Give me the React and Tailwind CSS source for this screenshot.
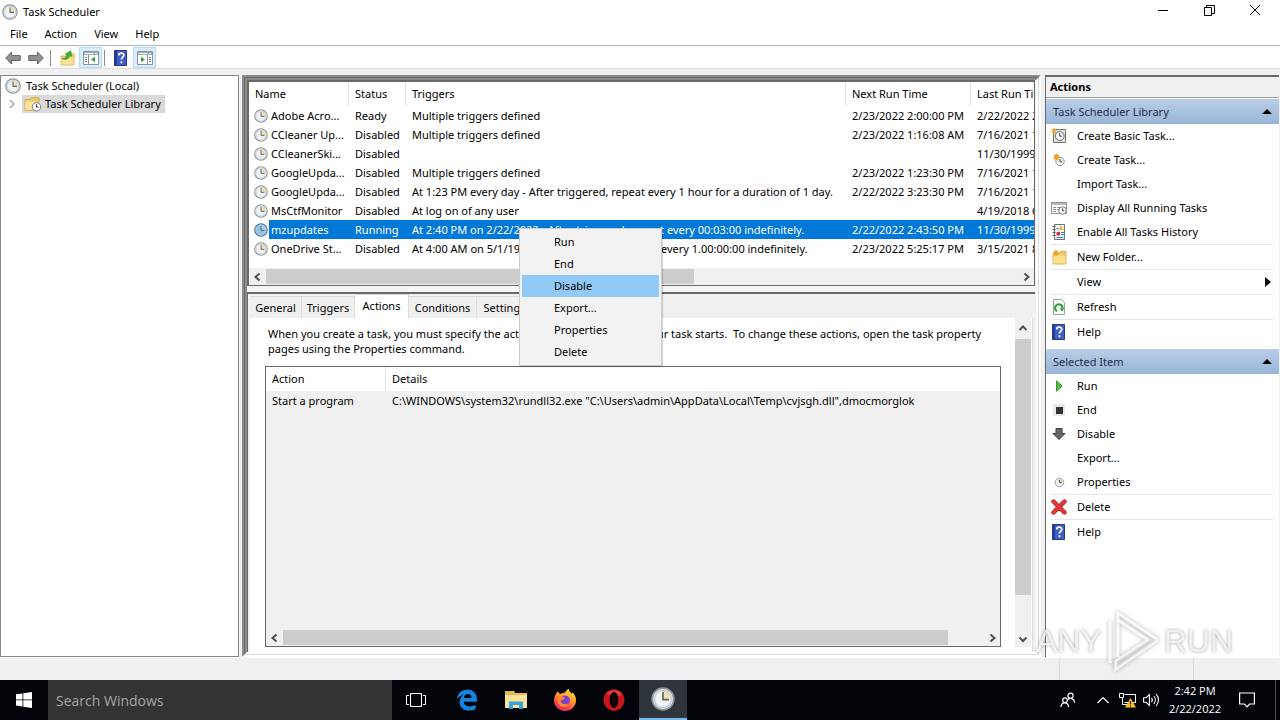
import React, { useState } from "react";

const tasks = [
  { name: "Adobe Acro...", status: "Ready", trigger: "Multiple triggers defined", next: "2/23/2022 2:00:00 PM", last: "2/22/2022 2:00:01 PM" },
  { name: "CCleaner Up...", status: "Disabled", trigger: "Multiple triggers defined", next: "2/23/2022 1:16:08 AM", last: "7/16/2021 1:16:08 AM" },
  { name: "CCleanerSki...", status: "Disabled", trigger: "", next: "", last: "11/30/1999 12:00:00 AM" },
  { name: "GoogleUpda...", status: "Disabled", trigger: "Multiple triggers defined", next: "2/23/2022 1:23:30 PM", last: "7/16/2021 1:23:30 PM" },
  { name: "GoogleUpda...", status: "Disabled", trigger: "At 1:23 PM every day - After triggered, repeat every 1 hour for a duration of 1 day.", next: "2/22/2022 3:23:30 PM", last: "7/16/2021 1:23:30 PM" },
  { name: "MsCtfMonitor", status: "Disabled", trigger: "At log on of any user", next: "", last: "4/19/2018 6:40:12 AM" },
  { name: "mzupdates", status: "Running", trigger: "At 2:40 PM on 2/22/2022 - After triggered, repeat every 00:03:00 indefinitely.", next: "2/22/2022 2:43:50 PM", last: "11/30/1999 12:00:00 AM" },
  { name: "OneDrive St...", status: "Disabled", trigger: "At 4:00 AM on 5/1/1992 - After triggered, repeat every 1.00:00:00 indefinitely.", next: "2/23/2022 5:25:17 PM", last: "3/15/2021 8:12:44 AM" },
];

const Clock = ({ size = 14, face = "#f1f3f3", wedge = "#f3dfae", rim = "#8d959b" }) => (
  <svg width={size} height={size} viewBox="0 0 16 16" className="shrink-0">
    <circle cx="8" cy="8" r="7.2" fill={face} stroke={rim} strokeWidth="1.2" />
    <path d="M8 8V2.2A5.8 5.8 0 0 1 13.8 8Z" fill={wedge} />
    <circle cx="8" cy="8" r="5.7" fill="none" stroke="#b9cddb" strokeWidth=".8" />
    <path d="M8 3.4V8.4H12" fill="none" stroke="#5c646b" strokeWidth="1.1" />
  </svg>
);

const HelpIcon = () => (
  <svg width="16" height="16" viewBox="0 0 16 16">
    <path d="M1.5.5h12v15h-12z" fill="#3f5fc4" stroke="#25368c" />
    <path d="M2 1h2v14H2z" fill="#263a9c" />
    <path d="M5.8 5.4C5.8 2.4 10.8 2.5 10.8 5.2 10.8 7.2 8.4 7 8.4 9.6M8.4 11.3v1.9" fill="none" stroke="#fff" strokeWidth="1.7" />
  </svg>
);

const ConsoleIcon = ({ flip }) => (
  <svg width="16" height="16" viewBox="0 0 16 16">
    <path d="M.5 1.5h15v13H.5z" fill="#fff" stroke="#8b959d" />
    <path d="M1 2h14v3H1z" fill="#a2abb2" />
    <path d="M2 3.5h8M12 3.5h2" stroke="#fff" />
    {flip ? (
      <>
        <path d="M10.5 5v9" stroke="#8b959d" />
        <path d="M12 7.5h2M12 9.5h2M12 11.5h2" stroke="#6d7c88" />
        <path d="M4 6.8v5.4L8 9.5z" fill="#3aa13a" />
      </>
    ) : (
      <>
        <path d="M5.5 5v9" stroke="#8b959d" />
        <path d="M2 7.5h2M2 9.5h2M2 11.5h2" stroke="#6d7c88" />
        <path d="M12 6.8v5.4L8 9.5z" fill="#3aa13a" />
      </>
    )}
  </svg>
);

const NavArrow = ({ right }) => (
  <svg width="16" height="14" viewBox="0 0 16 14">
    <path
      d={right ? "M15.3 7 9.5 1v3.6H.8v4.8h8.7V13z" : "M.7 7l5.8-6v3.6h8.7v4.8H6.5V13z"}
      fill="#929292"
      stroke="#5f5f5f"
    />
  </svg>
);

const Folder = ({ children }) => (
  <svg width="18" height="16" viewBox="0 0 18 16">
    <path d="M1 3.5h5l1.5-2H15v12.8H1z" fill="#eec867" stroke="#cfa13c" strokeWidth=".8" />
    <path d="M1.4 5.5h13.2v8.4H1.4z" fill="#fbe39b" />
    {children}
  </svg>
);

const FolderClock = () => (
  <Folder>
    <circle cx="12.5" cy="10.8" r="4.2" fill="#fff" stroke="#747c82" />
    <path d="M12.5 8.2v2.9h2.2" fill="none" stroke="#333" />
  </Folder>
);

const FolderUp = () => (
  <svg width="18" height="16" viewBox="0 0 18 16">
    <path d="M2 6h6l1.5-2H15v11H2z" fill="#f3d27c" stroke="#cfa13c" strokeWidth=".8" />
    <path d="M2.4 8h12.2v6.6H2.4z" fill="#fbe09a" />
    <path d="M3 8.5c3.5 0 4.6-2 5-3.6L6.2 4 11.8.8l1 5.6-1.7-.8C10 8.5 7 10.6 3 8.5z" fill="#45b32f" stroke="#2a8a1c" strokeWidth=".6" />
  </svg>
);

const NewFolder = () => (
  <svg width="18" height="16" viewBox="0 0 18 16">
    <path d="M2 4.5h6l1.5-2H15V15H2z" fill="#eec867" stroke="#cfa13c" strokeWidth=".8" />
    <path d="M2.4 6.5h12.2v8H2.4z" fill="#fbdf8c" />
    <path d="M5 1v6M2 4h6M2.9 1.9l4.2 4.2M7.1 1.9 2.9 6.1" stroke="#f0a020" strokeWidth="1.2" />
  </svg>
);

const BasicTaskIcon = () => (
  <svg width="16" height="16" viewBox="0 0 16 16">
    <path d="M2.5 1.5h12v13h-12z" fill="#e4e1d6" stroke="#77756c" />
    <circle cx="8.7" cy="8" r="4.4" fill="#fff" stroke="#56707c" />
    <path d="M8.7 5.2v3h2.2" fill="none" stroke="#333" />
    <path d="M3 0v6M0 3h6M.9.9l4.2 4.2M5.1.9.9 5.1" stroke="#f0a42c" />
  </svg>
);

const CreateTaskIcon = () => (
  <svg width="16" height="16" viewBox="0 0 16 16">
    <circle cx="9" cy="9.5" r="4.2" fill="#f5f5f0" stroke="#8b9298" />
    <path d="M9 7v2.8h2.3" fill="none" stroke="#444" />
    <path d="M5.5 2v6M2.5 5h6M3.4 2.9l4.2 4.2M7.6 2.9 3.4 7.1" stroke="#f0a020" strokeWidth="1.6" />
  </svg>
);

const RunningIcon = () => (
  <svg width="16" height="16" viewBox="0 0 16 16">
    <path d="M.5 2.5h15v11H.5z" fill="#fff" stroke="#8c9297" />
    <path d="M1 3h14v2H1z" fill="#b3b9bd" />
    <path d="M2 7.5h3M6 7.5h4M2 9.5h3M6 9.5h2M2 11.5h3" stroke="#8c9297" />
    <circle cx="11.5" cy="10.5" r="3.8" fill="#f6f6f6" stroke="#777e84" />
    <path d="M11.5 8.3v2.4h1.8" fill="none" stroke="#444" />
  </svg>
);

const HistoryIcon = () => (
  <svg width="16" height="16" viewBox="0 0 16 16">
    <path d="M3.5.5h10v15h-10z" fill="#eef3fa" stroke="#68737e" />
    <path d="M1.5 2.5h3M1.5 5.5h3M1.5 8.5h3M1.5 11.5h3" stroke="#555" />
    <path d="M10 1.5 12.6 6H7.4z" fill="#f2c029" />
    <path d="M5.5 4.5h2M10 8.5h3M10 10.5h3M5.5 13.5h7" stroke="#4d76c4" />
    <circle cx="7.3" cy="9.8" r="2" fill="#cf2d2d" />
  </svg>
);

const RefreshIcon = () => (
  <svg width="16" height="16" viewBox="0 0 16 16">
    <path d="M2.5.5h8l3 3v12h-11z" fill="#f5faf5" stroke="#9aa59a" />
    <path d="M6 12.2A3.7 3.7 0 1 1 11.4 9.8" fill="none" stroke="#35a03f" strokeWidth="2" />
    <path d="M8.8 9.3h4.4L11 12.8z" fill="#35a03f" />
  </svg>
);

const RunIcon = () => (
  <svg width="16" height="16" viewBox="0 0 16 16">
    <path d="M5.5 2.8v10.4l5.6-5.2z" fill="#4fbf3f" stroke="#2f962a" />
  </svg>
);

const EndIcon = () => (
  <svg width="16" height="16" viewBox="0 0 16 16">
    <path d="M2 2h12v12H2z" fill="#e9e9e9" />
    <path d="M5 5h7v7H5z" fill="#333" />
  </svg>
);

const DisableIcon = () => (
  <svg width="16" height="16" viewBox="0 0 16 16">
    <path d="M5 2.5h6v5h3L8 13.5 2 7.5h3z" fill="#666" stroke="#3c3c3c" />
  </svg>
);

const DeleteIcon = () => (
  <svg width="16" height="16" viewBox="0 0 16 16">
    <path d="M2.5 2.5l11 11M13.5 2.5l-11 11" stroke="#b91d20" strokeWidth="4.4" strokeLinecap="round" />
    <path d="M2.5 2.5l11 11M13.5 2.5l-11 11" stroke="#e5383b" strokeWidth="3" strokeLinecap="round" />
  </svg>
);

const PropertiesIcon = () => (
  <svg width="16" height="16" viewBox="0 0 16 16">
    <circle cx="8.5" cy="8.5" r="4.3" fill="#eef3f6" stroke="#9aa3a9" />
    <path d="M8.5 8.5V5.2a3.3 3.3 0 0 1 3.3 3.3z" fill="#f2cf8e" />
    <path d="M8.5 5.8v3h2.4" fill="none" stroke="#555" />
  </svg>
);

const libraryActions = [
  { label: "Create Basic Task...", icon: <BasicTaskIcon /> },
  { label: "Create Task...", icon: <CreateTaskIcon /> },
  { label: "Import Task..." },
  { label: "Display All Running Tasks", icon: <RunningIcon /> },
  { label: "Enable All Tasks History", icon: <HistoryIcon />, line: true },
  { label: "New Folder...", icon: <NewFolder />, line: true },
  { label: "View", arrow: true, line: true },
  { label: "Refresh", icon: <RefreshIcon />, line: true },
  { label: "Help", icon: <HelpIcon /> },
];

const itemActions = [
  { label: "Run", icon: <RunIcon /> },
  { label: "End", icon: <EndIcon /> },
  { label: "Disable", icon: <DisableIcon /> },
  { label: "Export..." },
  { label: "Properties", icon: <PropertiesIcon />, line: true },
  { label: "Delete", icon: <DeleteIcon />, line: true },
  { label: "Help", icon: <HelpIcon /> },
];

const ActionSection = ({ title, items }) => (
  <section>
    <h3 className="flex h-[25px] items-center justify-between bg-gradient-to-b from-[#b9cee6] to-[#98b5d8] pl-[7px] pr-[7px] text-[#1e2f4a]">
      {title}
      <svg width="10" height="5" viewBox="0 0 10 5">
        <path d="M0 5 5 0l5 5z" fill="#000" />
      </svg>
    </h3>
    {items.map((item) => (
      <div key={item.label} className="pl-[5px] pr-[6px]">
        <button className={`flex h-6 w-full items-center text-left hover:bg-[#e5f1fb] ${item.line ? "box-content border-b border-[#e6e6e6]" : ""}`}>
          <span className="flex w-[26px] shrink-0">{item.icon}</span>
          <span className="flex-1">{item.label}</span>
          {item.arrow && (
            <svg width="6" height="10" viewBox="0 0 6 10" className="mr-[2px]">
              <path d="M0 0l6 5-6 5z" fill="#000" />
            </svg>
          )}
        </button>
      </div>
    ))}
  </section>
);

const chevrons = {
  left: "M7.5 2.5 3.5 6l4 3.5",
  right: "M4.5 2.5l4 3.5-4 3.5",
  up: "M2.5 8 6 4.5 9.5 8",
  down: "M2.5 4.5 6 8l3.5-3.5",
};

const ScrollButton = ({ dir }) => (
  <button aria-label={`Scroll ${dir}`} className="flex h-[17px] w-[17px] shrink-0 items-center justify-center">
    <svg width="12" height="12" viewBox="0 0 12 12">
      <path d={chevrons[dir]} fill="none" stroke="#505050" strokeWidth="2" />
    </svg>
  </button>
);

const HScroll = ({ thumb }) => (
  <div className="flex h-[17px] shrink-0 items-center bg-[#f0f0f0]">
    <ScrollButton dir="left" />
    <div className="flex h-[15px] flex-1">
      <div className={`h-full bg-[#cdcdcd] ${thumb}`} />
    </div>
    <ScrollButton dir="right" />
  </div>
);

const TaskTable = () => (
  <div className="min-h-0 flex-1 overflow-hidden">
    <table className="w-[864px] table-fixed border-separate border-spacing-0 whitespace-nowrap text-left">
      <colgroup>
        <col className="w-[100px]" />
        <col className="w-[57px]" />
        <col className="w-[440px]" />
        <col className="w-[125px]" />
        <col />
      </colgroup>
      <thead>
        <tr className="h-6">
          <th className="border-r border-[#e2e2e2] pl-[6px] font-normal">Name</th>
          <th className="border-r border-[#e2e2e2] pl-[6px] font-normal">Status</th>
          <th className="border-r border-[#e2e2e2] pl-[6px] font-normal">Triggers</th>
          <th className="border-r border-[#e2e2e2] pl-[6px] font-normal">Next Run Time</th>
          <th className="pl-[6px] font-normal">Last Run Time</th>
        </tr>
      </thead>
      <tbody>
        {tasks.map((t, i) => {
          const on = t.name === "mzupdates";
          const cell = on ? "bg-[#0078d7] pl-[6px] text-white" : "pl-[6px]";
          return (
            <tr key={i} className="h-[19px]">
              <td className="p-0">
                <div className="flex h-[19px] items-center pl-[5px]">
                  <Clock face={on ? "#8fc4ec" : undefined} wedge={on ? "#a9cfe6" : undefined} rim={on ? "#4a7696" : undefined} />
                  <span className={on ? "ml-px flex-1 bg-[#0078d7] pl-[2px] leading-[19px] text-white" : "ml-px pl-[2px] leading-[19px]"}>{t.name}</span>
                </div>
              </td>
              <td className={cell}>{t.status}</td>
              <td className={cell}>{t.trigger}</td>
              <td className={cell}>{t.next}</td>
              <td className={cell}>{t.last}</td>
            </tr>
          );
        })}
      </tbody>
    </table>
  </div>
);

const tabs = [
  { label: "General", width: "w-[52px]" },
  { label: "Triggers", width: "w-[53px]" },
  { label: "Actions", width: "w-[54px]" },
  { label: "Conditions", width: "w-[68px]" },
  { label: "Settings", width: "w-[56px]" },
];

const DetailsPane = () => {
  const [active, setActive] = useState("Actions");

  return (
    <div className="flex min-h-0 flex-1 flex-col border-l border-t-2 border-[#696969] bg-[#f0f0f0] pl-[2px]">
      <div role="tablist" className="flex h-6 shrink-0 items-end">
        {tabs.map((tab) => (
          <button
            key={tab.label}
            role="tab"
            aria-selected={active === tab.label}
            onClick={() => setActive(tab.label)}
            className={`${tab.width} whitespace-nowrap border-r border-t border-[#dcdcdc] text-center ${
              active === tab.label ? "h-6 bg-white pb-[2px]" : "h-[22px] bg-[#f0f0f0]"
            }`}
          >
            {tab.label}
          </button>
        ))}
      </div>
      <div className="mr-[2px] flex min-h-0 flex-1 border-r border-[#dcdcdc] bg-white">
        <div className="flex min-w-0 flex-1 flex-col pb-[5px] pl-[15px] pr-[14px]">
          <p className="h-12 shrink-0 whitespace-pre pl-[3px] pt-2 leading-[15px]">
            When you create a task, you must specify the action that will occur when your task starts.{"  "}To change these actions, open the task property
            <br />
            pages using the Properties command.
          </p>
          <div className="flex min-h-0 flex-1 flex-col border border-[#696969] bg-[#f0f0f0]">
            <table className="w-full table-fixed border-separate border-spacing-0 whitespace-nowrap text-left">
              <colgroup>
                <col className="w-[120px]" />
                <col />
              </colgroup>
              <thead>
                <tr className="h-6 bg-white">
                  <th className="border-r border-[#e2e2e2] pl-[6px] font-normal">Action</th>
                  <th className="pl-[6px] font-normal">Details</th>
                </tr>
              </thead>
              <tbody>
                <tr className="h-[19px]">
                  <td className="pl-[6px]">Start a program</td>
                  <td className="pl-[6px]">C:\WINDOWS\system32\rundll32.exe "C:\Users\admin\AppData\Local\Temp\cvjsgh.dll",dmocmorglok</td>
                </tr>
              </tbody>
            </table>
            <div className="flex-1" />
            <HScroll thumb="w-[95%]" />
          </div>
        </div>
        <div className="mb-[5px] mr-px flex w-4 flex-col items-center bg-[#f0f0f0] pt-px">
          <ScrollButton dir="up" />
          <div className="w-4 flex-1 pt-[3px]">
            <div className="h-[88%] w-full bg-[#cdcdcd]" />
          </div>
          <ScrollButton dir="down" />
        </div>
      </div>
    </div>
  );
};

const menuItems = ["Run", "End", "Disable", "Export...", "Properties", "Delete"];

const ContextMenu = () => (
  <div role="menu" className="absolute left-[519px] top-[228px] z-10 w-[143px] border border-[#cccccc] bg-[#f2f2f2] p-[2px] shadow-[1px_1px_1px_rgba(0,0,0,0.15)]">
    {menuItems.map((label) => (
      <button key={label} role="menuitem" className={`block h-[22px] w-full pl-8 text-left ${label === "Disable" ? "bg-[#91c9f7]" : "hover:bg-[#91c9f7]"}`}>
        {label}
      </button>
    ))}
  </div>
);

const Watermark = () => (
  <div className="pointer-events-none absolute bottom-[47px] right-[47px] z-20 flex items-center font-['Liberation_Sans',sans-serif] text-[32px] leading-[64px] text-white/80 [text-shadow:0_0_3px_rgba(0,0,0,0.4)]">
    <span>ANY</span>
    <svg width="62" height="64" viewBox="0 0 62 64" className="drop-shadow-[0_0_2px_rgba(0,0,0,0.35)]">
      <path d="M8 12v42M16 12V4l40 27M56 31 14 60v-8l32-21-30-20M16 12v36" fill="none" stroke="#fff" strokeWidth="3" opacity=".85" />
      <path d="M14 60 56 31l-8-1-34 22z" fill="#e2e2e2" opacity=".5" />
    </svg>
    <span>RUN</span>
  </div>
);

const Taskbar = () => (
  <footer className="flex h-10 shrink-0 items-center bg-[#02040a] text-white">
    <button aria-label="Start" className="flex h-10 w-12 items-center justify-center">
      <svg width="16" height="16" viewBox="0 0 16 16" fill="#fff">
        <path d="M0 2.3 6.5 1.4v6.1H0zM7.3 1.3 16 0v7.5H7.3zM0 8.3h6.5v6.2L0 13.6zM7.3 8.3H16V16l-8.7-1.3z" />
      </svg>
    </button>
    <input
      aria-label="Search Windows"
      placeholder="Search Windows"
      className="h-10 w-[344px] bg-[#333333] px-2 font-['Open_Sans',sans-serif] text-[14px] placeholder:text-[#a6a6a6] focus:outline-none"
    />
    <div className="flex gap-px">
      <button aria-label="Task View" className="mr-[2px] flex h-10 w-12 items-center justify-center">
        <svg width="20" height="14" viewBox="0 0 20 14" fill="none" stroke="#fff">
          <path d="M4.5.5h11v13h-11zM3 2.5H.5v9H3M17 2.5h2.5v9H17" />
        </svg>
      </button>
      <button aria-label="Edge" className="flex h-10 w-12 items-center justify-center">
        <svg width="22" height="22" viewBox="0 0 22 22">
          <path d="M1 10C1.6 4 6 .5 11.4.5 17.5.5 21 5 21 10.5v2.3H7.8c.2 3 2.7 4.6 5.8 4.6 2.3 0 4.3-.7 6-1.7v4.2c-1.9 1.1-4.2 1.6-6.7 1.6-5.7 0-9.3-3.3-9.3-8.3 0-3.5 1.9-6.2 4.7-7.7C5 6.1 2.7 7.8 1 10zM7.9 9h7.6c0-2.4-1.2-3.9-3.6-3.9-2.2 0-3.6 1.6-4 3.9z" fill="#1484dd" />
        </svg>
      </button>
      <button aria-label="File Explorer" className="flex h-10 w-12 items-center justify-center">
        <svg width="22" height="20" viewBox="0 0 22 20">
          <path d="M0 1h9l1.5 2H22v15H0z" fill="#e9b94d" />
          <path d="M0 5h22v13H0z" fill="#fbe29a" />
          <path d="M4 19v-7.5h14V19h-4v-4H8v4z" fill="#35a5dc" />
        </svg>
      </button>
      <button aria-label="Firefox" className="flex h-10 w-12 items-center justify-center">
        <svg width="24" height="24" viewBox="0 0 24 24">
          <defs>
            <linearGradient id="fox" x1=".8" y1="0" x2=".3" y2="1">
              <stop offset="0" stopColor="#ffe64a" />
              <stop offset=".45" stopColor="#ff9a26" />
              <stop offset=".8" stopColor="#ff3b52" />
              <stop offset="1" stopColor="#e3207f" />
            </linearGradient>
          </defs>
          <path d="M4.5 3.5 7 6c1.3-.7 2.8-1 4.2-1L15.5.5c.3 2.5 2 3.5 3.7 5.5.2-.8.1-1.5 0-2C22 6.5 23.3 9.5 23 13c-.5 6-5.2 10-11 10C6 23 1 18.5 1 12.5c0-3 1.2-6 3.5-9z" fill="url(#fox)" />
          <circle cx="12" cy="12.5" r="5" fill="#7a3fd0" />
          <path d="M5 9.5c2.5-1.5 5-1 7 .5-1 2-3 1.7-4.5 2.7 1 4 6 4.5 8.5 2-1 4-6 5.5-9 3.3C4.5 16 4.2 12 5 9.5z" fill="#ff8a2a" />
        </svg>
      </button>
      <button aria-label="Opera" className="flex h-10 w-12 items-center justify-center">
        <svg width="22" height="22" viewBox="0 0 22 22">
          <ellipse cx="11" cy="11" rx="10.5" ry="10.8" fill="#c4161c" />
          <path d="M3 5a10.5 10.5 0 0 1 16 0L16 7 7 6z" fill="#ea5a5c" opacity=".6" />
          <ellipse cx="11" cy="11" rx="4.3" ry="8" fill="#0b0507" />
        </svg>
      </button>
      <button aria-label="Task Scheduler" className="flex h-10 w-12 items-center justify-center border-b-2 border-[#76b9ed] bg-[#2f353b]">
        <Clock size={24} />
      </button>
    </div>
    <div className="ml-auto flex h-10 items-center">
      <button aria-label="People" className="mr-[21px] flex">
        <svg width="16" height="16" viewBox="0 0 16 16" fill="none" stroke="#fff" strokeWidth="1.2">
          <circle cx="10.5" cy="3.8" r="2.6" />
          <circle cx="5" cy="8.2" r="2.3" />
          <path d="M1 15c0-5.5 7.5-5.5 7.5 0M8 7.6c3-2.4 6.5-.6 6.700 3" />
        </svg>
      </button>
      <button aria-label="Show hidden icons" className="mr-[10px] flex">
        <svg width="12" height="8" viewBox="0 0 12 8" fill="none" stroke="#fff" strokeWidth="1.2">
          <path d="M.5 7 6 1.5 11.5 7" />
        </svg>
      </button>
      <button aria-label="Network" className="mr-[7px] flex">
        <svg width="17" height="16" viewBox="0 0 17 16">
          <path d="M5.5 2.5h11v8h-11M3.5 6v6.5h5M.5 1.5h4v4h-4z" fill="none" stroke="#fff" />
          <path d="M11.5 6 17 15.5H6z" fill="#ffc21a" />
          <path d="M11.5 9v3.5M11.5 13.3v1.2" stroke="#222" strokeWidth="1.2" />
        </svg>
      </button>
      <button aria-label="Volume" className="mr-2 flex">
        <svg width="17" height="14" viewBox="0 0 17 14" fill="none" stroke="#fff" strokeWidth="1.1">
          <path d="M.6 4.7h2.6L6.4 1.5v11L3.2 9.3H.6zM8.5 4.8c1 1.3 1 3.1 0 4.4M10.8 3c2 2.3 2 5.7 0 8M13.2 1.2c3 3.4 3 8.2 0 11.6" />
        </svg>
      </button>
      <div className="w-[54px] text-center font-['Open_Sans',sans-serif] text-[11px] leading-[18px]">
        2:42 PM
        <br />
        2/22/2022
      </div>
      <button aria-label="Notifications" className="ml-[17px] mr-5 flex">
        <svg width="16" height="16" viewBox="0 0 16 16" fill="none" stroke="#fff" strokeWidth="1.2">
          <path d="M.6 1h14.8v11H10.5L8 14.8 5.5 12H.6z" />
        </svg>
      </button>
      <div className="h-10 w-[5px] border-l border-[#4a4c50]" />
    </div>
  </footer>
);

const App = () => {
  return (
    <div className="relative flex h-screen flex-col overflow-hidden bg-[#f0f0f0] font-['Noto_Sans','Open_Sans',sans-serif] text-[11px] leading-[16px] text-black">
      {/* Title bar */}
      <header className="flex h-6 shrink-0 items-center bg-white pl-[2px] pr-[2px]">
        <Clock size={16} />
        <h1 className="ml-[5px] flex-1">Task Scheduler</h1>
        <div className="flex h-6 pb-1">
          <button aria-label="Minimize" className="flex w-[46px] items-center justify-center">
            <svg width="10" height="10"><path d="M0 5.5h10" stroke="#000" /></svg>
          </button>
          <button aria-label="Restore" className="flex w-[46px] items-center justify-center">
            <svg width="11" height="11" fill="none" stroke="#000"><path d="M.5 2.5h7v8h-7zM2.5 2.5v-2h8v8h-3" /></svg>
          </button>
          <button aria-label="Close" className="flex w-[46px] items-center justify-center">
            <svg width="10" height="10" stroke="#000"><path d="M0 0l10 10M10 0 0 10" /></svg>
          </button>
        </div>
      </header>

      {/* Menu bar */}
      <nav className="flex h-[22px] shrink-0 items-center gap-[17px] border-b border-[#b4b4b4] bg-white pb-px pl-[10px]">
        <button>File</button>
        <button>Action</button>
        <button>View</button>
        <button>Help</button>
      </nav>

      {/* Toolbar */}
      <div className="flex h-[23px] shrink-0 items-center border-b border-[#dcdcdc] bg-white pl-[5px] pt-px">
        <button aria-label="Back"><NavArrow /></button>
        <button aria-label="Forward" className="ml-[7px]"><NavArrow right /></button>
        <div className="ml-[6px] h-4 w-px bg-[#8c8c8c]" />
        <button aria-label="Up one level" className="ml-2"><FolderUp /></button>
        <button aria-label="Show console tree" className="ml-[2px] flex h-[21px] w-[23px] items-center justify-center border border-[#b5dcfb] bg-[#d8ecfb]"><ConsoleIcon /></button>
        <div className="ml-[2px] h-4 w-px bg-[#8c8c8c]" />
        <button aria-label="Help" className="ml-2"><HelpIcon /></button>
        <button aria-label="Show action pane" className="ml-1 flex h-[21px] w-[23px] items-center justify-center border border-[#b5dcfb] bg-[#d8ecfb]"><ConsoleIcon flip /></button>
      </div>

      <main className="mt-[6px] flex min-h-0 flex-1">
        {/* Tree */}
        <aside className="w-[239px] shrink-0 border border-[#828790] bg-white pt-px">
          <div className="flex h-[18px] items-center pl-1">
            <Clock size={16} />
            <span className="ml-[5px]">Task Scheduler (Local)</span>
          </div>
          <div className="flex h-[18px] items-center pl-2">
            <svg width="7" height="10" viewBox="0 0 7 10" fill="none" stroke="#a0a0a0" strokeWidth="1.3">
              <path d="M1 1l4 4-4 4" />
            </svg>
            <div className="ml-[6px] flex h-[18px] items-center bg-[#d9d9d9] pl-[2px] pr-1">
              <FolderClock />
              <span className="ml-[3px]">Task Scheduler Library</span>
            </div>
          </div>
        </aside>

        {/* Task list and details */}
        <div className="ml-[3px] flex min-w-0 flex-1 border-2 border-b-white border-l-[#8c8c8c] border-r-white border-t-[#8c8c8c]">
          <div className="flex min-w-0 flex-1 border border-b-[#dcdcdc] border-l-[#696969] border-r-[#dcdcdc] border-t-[#696969]">
            <div className="flex min-w-0 flex-1 flex-col border-2 border-b-white border-l-[#8c8c8c] border-r-white border-t-[#8c8c8c] pr-px">
              <div className="flex h-[206px] shrink-0 flex-col border-2 border-b border-r border-[#696969] bg-white">
                <TaskTable />
                <HScroll thumb="w-[57%]" />
              </div>
              <div className="h-[6px] shrink-0 bg-[#f5f5f5]" />
              <DetailsPane />
            </div>
          </div>
        </div>

        {/* Actions pane */}
        <aside className="ml-1 mr-px w-[234px] shrink-0 border-l border-t-2 border-[#696969] bg-white">
          <h2 className="mb-px flex h-[21px] items-center border-b border-[#a0a0a0] bg-[#f0f0f0] pl-1 font-bold">Actions</h2>
          <ActionSection title="Task Scheduler Library" items={libraryActions} />
          <div className="h-[5px]" />
          <ActionSection title="Selected Item" items={itemActions} />
        </aside>
      </main>

      {/* Status bar */}
      <div className="flex h-[23px] shrink-0 justify-end border-t border-white">
        <div className="w-[134px] border-l border-[#d7d7d7]" />
        <div className="w-[87px] border-l border-[#d7d7d7]" />
      </div>

      <Taskbar />
      <ContextMenu />
      <Watermark />
    </div>
  );
};

export default App;
